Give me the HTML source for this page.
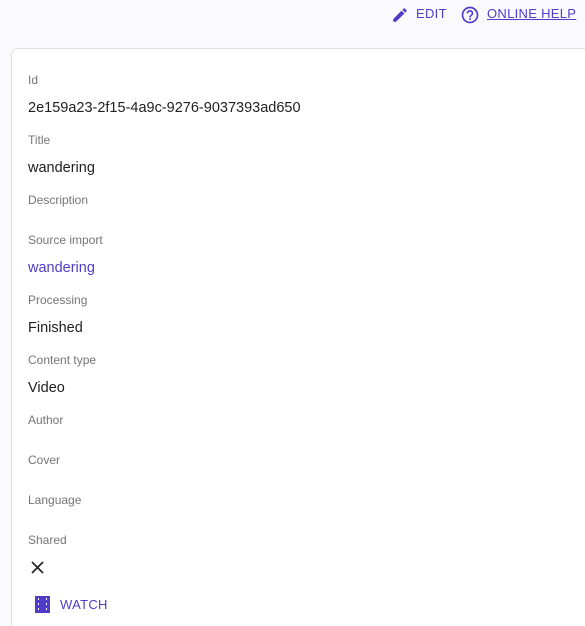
<!DOCTYPE html><html style="overflow:hidden;height:626px"><head><style>
body{margin:0;width:585px;height:626px;background:#fafafe;font-family:"Liberation Sans",sans-serif;position:relative;overflow:hidden}
.card{position:absolute;left:11px;top:48px;width:600px;height:600px;background:#fff;border:1px solid #e0e0e0;border-radius:8px}
.t{position:absolute;left:28px;white-space:nowrap}
.l{font-size:12px;color:#757575}
.v{font-size:14.5px;color:#212121}
.top{position:absolute;top:6px;font-size:13px;color:#4f3cc9;letter-spacing:.3px}
</style></head><body>
<svg style="position:absolute;left:391px;top:6px" width="18" height="18" viewBox="0 0 24 24"><path fill="#4f3cc9" d="M3 17.25V21h3.75L17.81 9.94l-3.75-3.75L3 17.25zM20.71 7.04a1 1 0 000-1.41l-2.34-2.34a1 1 0 00-1.41 0l-1.830 1.83 3.75 3.75 1.83-1.83z"/></svg>
<div class="top" style="left:416px">EDIT</div>
<svg style="position:absolute;left:460px;top:5px" width="20" height="20" viewBox="0 0 24 24"><path fill="#4f3cc9" d="M11 18h2v-2h-2v2zm1-16C6.48 2 2 6.48 2 12s4.48 10 10 10 10-4.48 10-10S17.52 2 12 2zm0 18c-4.41 0-8-3.59-8-8s3.59-8 8-8 8 3.59 8 8-3.59 8-8 8zm0-14c-2.21 0-4 1.79-4 4h2c0-1.1.9-2 2-2s2 .9 2 2c0 2-3 1.75-3 5h2c0-2.25 3-2.5 3-5 0-2.21-1.79-4-4-4z"/></svg>
<div class="top" style="left:487px;text-decoration:underline">ONLINE HELP</div>
<div class="card"></div>
<div class="t l" style="top:73px">Id</div>
<div class="t v" style="top:100px">2e159a23-2f15-4a9c-9276-9037393ad650</div>
<div class="t l" style="top:133px">Title</div>
<div class="t v" style="top:160px">wandering</div>
<div class="t l" style="top:193px">Description</div>
<div class="t l" style="top:233px">Source import</div>
<div class="t v" style="top:260px;color:#4f3cc9">wandering</div>
<div class="t l" style="top:293px">Processing</div>
<div class="t v" style="top:320px">Finished</div>
<div class="t l" style="top:353px">Content type</div>
<div class="t v" style="top:380px">Video</div>
<div class="t l" style="top:413px">Author</div>
<div class="t l" style="top:453px">Cover</div>
<div class="t l" style="top:493px">Language</div>
<div class="t l" style="top:533px">Shared</div>
<svg style="position:absolute;left:30px;top:560px" width="16" height="16" viewBox="0 0 16 16"><path d="M2 2L13 13M13 2L2 13" stroke="#212121" stroke-width="1.6"/></svg>
<svg style="position:absolute;left:35px;top:596px" width="15" height="17" viewBox="0 0 15 17"><path fill="#4f3cc9" d="M0 0h15v17H0z"/><g fill="#fff"><rect x="3" y="2" width="1" height="2"/><rect x="3" y="7" width="1" height="2"/><rect x="3" y="12" width="1" height="2"/><rect x="11" y="2" width="1" height="2"/><rect x="11" y="7" width="1" height="2"/><rect x="11" y="12" width="1" height="2"/></g></svg>
<div class="top" style="left:60px;top:597px">WATCH</div>
</body></html>
